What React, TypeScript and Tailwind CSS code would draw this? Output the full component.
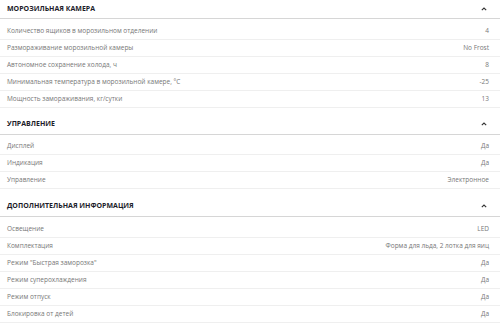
import React from "react";

type Row = [string, string];
const sections: { title: string; rows: Row[] }[] = [
  {
    title: "МОРОЗИЛЬНАЯ КАМЕРА",
    rows: [
      ["Количество ящиков в морозильном отделении", "4"],
      ["Размораживание морозильной камеры", "No Frost"],
      ["Автономное сохранение холода, ч", "8"],
      ["Минимальная температура в морозильной камере, °C", "-25"],
      ["Мощность замораживания, кг/сутки", "13"],
    ],
  },
  {
    title: "УПРАВЛЕНИЕ",
    rows: [
      ["Дисплей", "Да"],
      ["Индикация", "Да"],
      ["Управление", "Электронное"],
    ],
  },
  {
    title: "ДОПОЛНИТЕЛЬНАЯ ИНФОРМАЦИЯ",
    rows: [
      ["Освещение", "LED"],
      ["Комплектация", "Форма для льда, 2 лотка для яиц"],
      ["Режим \"Быстрая заморозка\"", "Да"],
      ["Режим суперохлаждения", "Да"],
      ["Режим отпуск", "Да"],
      ["Блокировка от детей", "Да"],
    ],
  },
];

function Chevron() {
  return (
    <svg width="6" height="4" viewBox="0 0 6 4" className="block">
      <polyline points="0.8,3.2 3,1 5.2,3.2" fill="none" stroke="#333" strokeWidth="1.1" />
    </svg>
  );
}

export default function App() {
  return (
    <div
      className="w-[500px] h-[323px] overflow-hidden bg-white"
      style={{ fontFamily: "'Open Sans', Lato, sans-serif" }}
    >
      {sections.map((s, i) => (
        <div key={s.title} className={i === 0 ? "" : i === 1 ? "pt-[6px]" : "pt-[7px]"}>
          <div
            className={`flex items-center justify-between pl-[7px] pr-[13px] border-b border-[#d6d6d6] ${
              i === 0 ? "h-[19px]" : "h-[21px]"
            }`}
          >
            <span className="text-[7px] font-bold text-[#1c1c2a]">{s.title}</span>
            <Chevron />
          </div>
          <div className={i === 1 ? "pt-[3px]" : "pt-[4px]"}>
            {s.rows.map(([k, v]) => (
              <div
                key={k}
                className="flex items-center justify-between h-[17px] pl-[7px] pr-[11px] border-b border-[#efefef] text-[6.5px] text-[#777]"
              >
                <span>{k}</span>
                <span>{v}</span>
              </div>
            ))}
          </div>
        </div>
      ))}
    </div>
  );
}
